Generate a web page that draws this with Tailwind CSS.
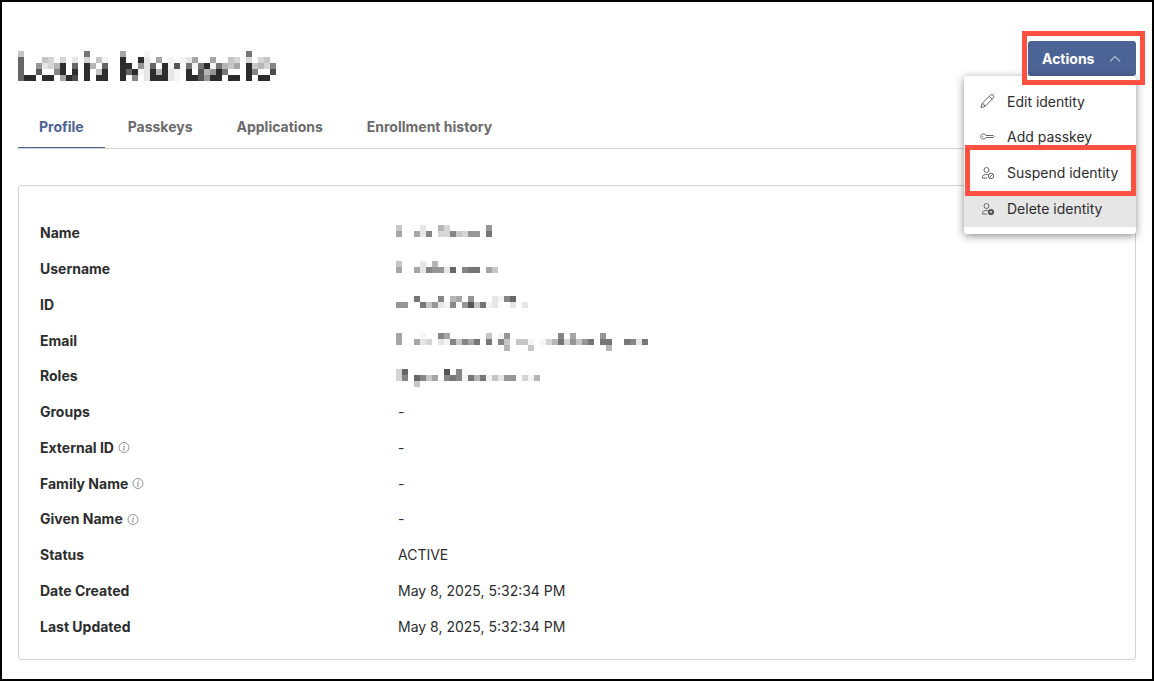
<!DOCTYPE html>
<html lang="en">
<head>
<meta charset="utf-8">
<meta name="viewport" content="width=device-width, initial-scale=1">
<title>Identity profile</title>
<script src="https://cdn.jsdelivr.net/npm/@tailwindcss/browser@4"></script>
</head>
<body class="bg-white font-['Inter',sans-serif] text-[14px] text-[#2d2d2d]">
<div class="min-h-screen border-2 border-black px-4 pt-[39px] pb-[19px]">
  <header class="flex items-start justify-between">
    <h1 class="pt-[10px]" aria-label="Redacted name">
      <svg class="block" data-mosaic="c..........7.....a...f................7|6...cd.d.e.d.cf..2..2e.a.f.fea..a..cd.d.dc|6..9edb2.6.2b.6..22.9e6.2f5.7f72f7bca.2cbd8|6..5..82.2.2.c2..262fe2b2ef.2.5b927...28..4|622.22.a24.2.22..2.8.e222ef.225922.22.2.22"></svg>
    </h1>
    <div class="relative">
      <button type="button" aria-haspopup="menu" aria-expanded="true" aria-controls="actions-menu" class="flex h-[35px] w-[108px] items-center justify-between rounded-[3px] bg-[#4c6395] pr-[15px] pl-[14px] font-bold text-white">
        Actions
        <svg class="h-3 w-3" viewBox="0 0 12 12" fill="none" stroke="#a8b4cd" stroke-width="1.3" aria-hidden="true"><path d="M1 8.500 6 3.500l5 5"/></svg>
      </button>
      <ul id="actions-menu" role="menu" class="absolute top-full right-0 z-10 w-[172px] rounded-[3px] bg-white py-[7px] shadow-[0_2px_8px_rgba(0,0,0,0.45)]">
        <li role="none"><button type="button" role="menuitem" class="flex h-9 w-full items-center gap-[11px] pl-4 whitespace-nowrap">
          <svg class="h-4 w-4 shrink-0" viewBox="0 0 16 16" fill="none" stroke="#666" stroke-width="1" stroke-linejoin="round" aria-hidden="true"><path d="M1 14.500 2 10.500 10.600 2q1.400-1 2.600.2t.2 2.600L5 13.500ZM2 10.500q2.500.4 3 3M9.300 3.300l2.900 2.900"/></svg>
          Edit identity</button></li>
        <li role="none"><button type="button" role="menuitem" class="flex h-9 w-full items-center gap-[11px] pb-0.5 pl-4 whitespace-nowrap">
          <svg class="h-4 w-4 shrink-0" viewBox="0 0 16 16" fill="none" stroke="#666" stroke-width="1" stroke-linejoin="round" aria-hidden="true"><path d="M5.900 7.500h7.300l1 1-1 1H5.900A2.700 2.600 0 1 1 5.900 7.500Z"/><circle cx="2.800" cy="8.500" r=".3"/></svg>
          Add passkey</button></li>
        <li role="none" class="relative"><button type="button" role="menuitem" class="flex h-9 w-full items-center gap-[11px] pb-0.5 pl-4 whitespace-nowrap">
          <svg class="h-4 w-4 shrink-0" viewBox="0 0 16 16" fill="none" stroke="#666" stroke-width="1" aria-hidden="true"><circle cx="6.500" cy="6" r="2.500"/><path d="M7 14H2.500v-1.500Q3 10.500 5.500 10.500h2.300"/><circle cx="11" cy="12" r="2.700"/><path d="m9.200 13.800 3.600-3.600"/></svg>
          Suspend identity</button>
          <span class="pointer-events-none absolute -top-[10px] right-0 -bottom-[5px] left-px border-5 border-[#ff5042]"></span></li>
        <li role="none"><button type="button" role="menuitem" class="flex h-9 w-full items-center gap-[11px] bg-[#e6e6e6] pb-0.5 pl-4 whitespace-nowrap">
          <svg class="h-4 w-4 shrink-0" viewBox="0 0 16 16" fill="none" stroke="#666" stroke-width="1" aria-hidden="true"><circle cx="6.500" cy="6" r="2.500"/><path d="M7 14H2.500v-1.500Q3 10.500 5.500 10.500h2.300"/><circle cx="11" cy="12" r="3.100" fill="#555" stroke="none"/><path d="m10 11 2 2m0-2-2 2" stroke="#ddd" stroke-width=".8"/></svg>
          Delete identity</button></li>
      </ul>
      <span class="pointer-events-none absolute -top-[10px] -right-[9px] -bottom-[9px] -left-[6px] z-20 border-5 border-[#ff5042]"></span>
    </div>
  </header>

  <nav class="mt-[24px] flex gap-0.5 border-b border-[#d2d2d2] font-bold text-[#6b6b6b]" aria-label="Sections">
    <a href="#profile" aria-current="page" class="flex h-[43px] items-center border-b border-[#4c6395] px-[21px] text-[#4c6395]">Profile</a>
    <a href="#passkeys" class="flex h-[43px] items-center px-[21px]">Passkeys</a>
    <a href="#applications" class="flex h-[43px] items-center px-[21px]">Applications</a>
    <a href="#history" class="flex h-[43px] items-center px-[21px]">Enrollment history</a>
  </nav>

  <main class="mt-9 rounded-[3px] border border-[#d2d2d2] px-[21px] pt-[29px] pb-[15px]">
    <table class="h-[429px] w-full table-fixed text-left">
      <tbody>
        <tr><th scope="row" class="w-1/3 font-bold">Name</th><td><svg class="mb-1 -ml-0.5 block" aria-label="Redacted" data-mosaic="c...e..bd......9|a..ae8.dd8cd99.7"></svg></td></tr>
        <tr><th scope="row" class="font-bold">Username</th><td><svg class="mb-1 -ml-0.5 block" aria-label="Redacted" data-mosaic="c...e.b|a..ae899e6.877.ac"></svg></td></tr>
        <tr><th scope="row" class="font-bold">ID</th><td><svg class="mb-1 -ml-0.5 block" aria-label="Redacted" data-mosaic="...7...8.ba.9...ef86|99..7c9ef8.95c7fe..e.e"></svg></td></tr>
        <tr><th scope="row" class="font-bold">Email</th><td><svg class="mt-0.5 -mb-0.5 -ml-0.5 block" aria-label="Redacted" data-mosaic="a...f..8a......c.f9........8.a....9|a..aed.ef8c8a7.7.8c.ccf.fdb7d9c97.77..78e7|..................b...c............b"></svg></td></tr>
        <tr><th scope="row" class="font-bold">Roles</th><td><svg class="mt-0.5 -mb-0.5 -ml-0.5 block" aria-label="Redacted" data-mosaic="d6......5.8|d8.68ca.878f7b7fce99.dfb|...c"></svg></td></tr>
        <tr><th scope="row" class="font-bold">Groups</th><td>-</td></tr>
        <tr><th scope="row" class="font-bold"><span class="flex items-center gap-1">External ID <svg class="h-3 w-3" viewBox="0 0 12 12" fill="none" stroke="#777" stroke-width=".8" role="img" aria-label="Info"><circle cx="6" cy="6.500" r="5"/><path d="M5.200 5.500h1.200L5.500 9.200h1M6.700 3.400 6.500 4.300"/></svg></span></th><td>-</td></tr>
        <tr><th scope="row" class="font-bold"><span class="flex items-center gap-1">Family Name <svg class="h-3 w-3" viewBox="0 0 12 12" fill="none" stroke="#777" stroke-width=".8" role="img" aria-label="Info"><circle cx="6" cy="6.500" r="5"/><path d="M5.200 5.500h1.200L5.500 9.200h1M6.700 3.400 6.500 4.300"/></svg></span></th><td>-</td></tr>
        <tr><th scope="row" class="font-bold"><span class="flex items-center gap-1">Given Name <svg class="h-3 w-3" viewBox="0 0 12 12" fill="none" stroke="#777" stroke-width=".8" role="img" aria-label="Info"><circle cx="6" cy="6.500" r="5"/><path d="M5.200 5.500h1.200L5.500 9.200h1M6.700 3.400 6.500 4.300"/></svg></span></th><td>-</td></tr>
        <tr><th scope="row" class="font-bold">Status</th><td>ACTIVE</td></tr>
        <tr><th scope="row" class="font-bold">Date Created</th><td>May 8, 2025, 5:32:34 PM</td></tr>
        <tr><th scope="row" class="font-bold">Last Updated</th><td>May 8, 2025, 5:32:34 PM</td></tr>
      </tbody>
    </table>
  </main>
</div>
<script>
// Redacted values: one hex digit per 6px cell gives its grey level, "." is empty, "|" ends a row.
document.querySelectorAll('svg[data-mosaic]').forEach(svg => {
  const rows = svg.dataset.mosaic.split('|');
  const cols = Math.max(...rows.map(r => r.length));
  svg.setAttribute('width', cols * 6);
  svg.setAttribute('height', rows.length * 6);
  svg.setAttribute('shape-rendering', 'crispEdges');
  rows.forEach((row, y) => [...row].forEach((c, x) => {
    if (c === '.') return;
    const rect = document.createElementNS('http://www.w3.org/2000/svg', 'rect');
    rect.setAttribute('x', x * 6);
    rect.setAttribute('y', y * 6);
    rect.setAttribute('width', 6);
    rect.setAttribute('height', 6);
    rect.setAttribute('fill', c === 'f' ? '#f4f4f4' : '#' + (c + (c < '5' ? 'c' : '6')).repeat(3));
    svg.append(rect);
  }));
});
</script>
</body>
</html>
